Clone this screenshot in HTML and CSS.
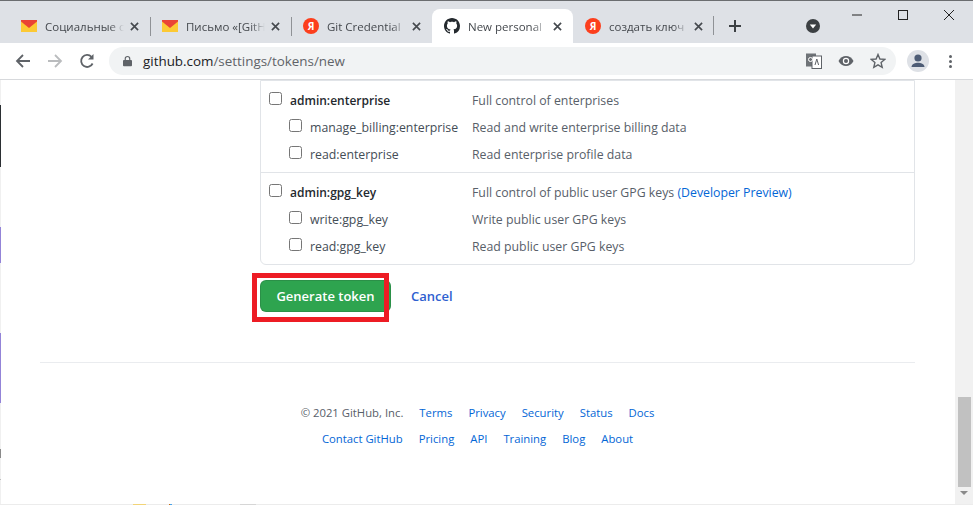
FILE: index.html
```html
<!DOCTYPE html>
<html lang="ru">
<head>
<meta charset="utf-8">
<title>New personal access token</title>
<link rel="stylesheet" href="styles.css">
</head>
<body>
<div class="browser">
  <div class="tabstrip">
    <div class="tab">
      <svg class="fav" viewBox="0 0 16 16"><rect y="2" width="16" height="12" fill="#fcc934"/><path d="M0 2h16v1.5L8 10 0 3.500z" fill="#ea4335"/></svg>
      <span class="tab-title">Социальные с</span>
      <svg class="tab-x" viewBox="0 0 10 10"><path d="M1 1l8 8M9 1l-8 8"/></svg>
    </div>
    <div class="tab sep">
      <svg class="fav" viewBox="0 0 16 16"><rect y="2" width="16" height="12" fill="#fcc934"/><path d="M0 2h16v1.5L8 10 0 3.500z" fill="#ea4335"/></svg>
      <span class="tab-title">Письмо «[GitH</span>
      <svg class="tab-x" viewBox="0 0 10 10"><path d="M1 1l8 8M9 1l-8 8"/></svg>
    </div>
    <div class="tab sep">
      <span class="ya">Я</span>
      <span class="tab-title">Git Credential</span>
      <svg class="tab-x" viewBox="0 0 10 10"><path d="M1 1l8 8M9 1l-8 8"/></svg>
    </div>
    <div class="tab active">
      <svg class="fav" viewBox="0 0 16 16"><path fill="#24292e" fill-rule="evenodd" d="M8 0C3.580 0 0 3.580 0 8c0 3.540 2.290 6.530 5.470 7.590.4.070.55-.17.55-.38 0-.19-.01-.82-.01-1.490-2.010.37-2.530-.49-2.690-.94-.09-.23-.48-.94-.82-1.130-.28-.15-.68-.52-.01-.53.63-.01 1.080.58 1.230.82.720 1.210 1.870.87 2.330.66.070-.52.280-.87.510-1.070-1.780-.2-3.640-.89-3.640-3.950 0-.87.310-1.590.820-2.150-.08-.2-.36-1.020.08-2.120 0 0 .67-.21 2.200.82.640-.18 1.320-.27 2-.27s1.360.09 2 .27c1.530-1.040 2.200-.82 2.200-.82.440 1.100.160 1.920.080 2.120.510.560.820 1.270.820 2.150 0 3.070-1.870 3.750-3.650 3.950.290.250.540.730.540 1.480 0 1.070-.010 1.930-.010 2.200 0 .210.150.460.550.380A8.010 8.010 0 0 0 16 8c0-4.420-3.580-8-8-8z"/></svg>
      <span class="tab-title">New personal</span>
      <svg class="tab-x" viewBox="0 0 10 10"><path d="M1 1l8 8M9 1l-8 8"/></svg>
    </div>
    <div class="tab">
      <span class="ya">Я</span>
      <span class="tab-title">создать ключ</span>
      <svg class="tab-x" viewBox="0 0 10 10"><path d="M1 1l8 8M9 1l-8 8"/></svg>
    </div>
    <div class="newtab">
      <svg class="plus" viewBox="0 0 12 12"><path d="M6 0v12M0 6h12"/></svg>
    </div>
    <svg class="tabsearch" viewBox="0 0 14 14"><circle cx="7" cy="7" r="7" fill="#3c4043"/><path d="M3.800 5.400h6.400L7 9.400z" fill="#fff"/></svg>
    <div class="winctl">
      <svg class="win" viewBox="0 0 12 12"><path d="M1 6h10"/></svg>
      <svg class="win" viewBox="0 0 12 12"><rect x="1.500" y="1.500" width="9" height="9"/></svg>
      <svg class="win" viewBox="0 0 12 12"><path d="M1 1l10 10M11 1L1 11"/></svg>
    </div>
  </div>

  <div class="toolbar">
    <svg class="nav" viewBox="0 0 16 16"><path d="M15 8H2M8 2L2 8l6 6"/></svg>
    <svg class="nav nav-off" viewBox="0 0 16 16"><path d="M1 8h13M8 2l6 6-6 6"/></svg>
    <svg class="nav" viewBox="0 0 16 16"><path d="M13.600 10.500A6 6 0 1 1 12.500 3.800"/><path class="solid" d="M14.500 1v5.500H9z"/></svg>
    <div class="omnibox">
      <svg class="lock" viewBox="0 0 10 12"><path d="M2.500 5V3.500a2.500 2.500 0 0 1 5 0V5" fill="none" stroke="#5f6368" stroke-width="1.300"/><rect y="4.800" width="10" height="7" rx="1" fill="#5f6368"/></svg>
      <span class="url"><span class="host">github.com</span>/settings/tokens/new</span>
      <div class="omni-actions">
        <svg class="omni-ic" viewBox="0 0 16 16"><rect x="0" y="0.500" width="10" height="13" fill="#6f7377"/><rect x="6" y="3" width="9.500" height="12.500" fill="#fff" stroke="#5f6368"/><path d="M9 12l1.800-6 1.800 6" fill="none" stroke="#5f6368"/><circle cx="4.500" cy="6.500" r="2" fill="none" stroke="#fff"/></svg>
        <svg class="omni-ic" viewBox="0 0 16 16"><path d="M0.500 8C2.200 4.800 5 3 8 3s5.800 1.800 7.500 5c-1.700 3.200-4.500 5-7.500 5S2.200 11.200.5 8z" fill="#5f6368"/><circle cx="8" cy="8" r="3.200" fill="#fff"/><circle cx="8" cy="8" r="2" fill="#5f6368"/></svg>
        <svg class="omni-ic" viewBox="0 0 16 16"><path d="M8 1.500l1.900 4.500 4.800.4-3.600 3.200 1.100 4.700L8 11.800l-4.200 2.500 1.100-4.700-3.600-3.200 4.800-.4z" fill="none" stroke="#5f6368" stroke-width="1.400"/></svg>
      </div>
    </div>
    <div class="avatar">
      <svg viewBox="0 0 22 22"><circle cx="11" cy="8" r="3.600" fill="#4d5c75"/><path d="M4.500 17c0-3.200 4-4.300 6.500-4.300s6.500 1.100 6.500 4.300z" fill="#4d5c75"/></svg>
    </div>
    <div class="kebab"><i></i><i></i><i></i></div>
  </div>

  <div class="viewport">
    <div class="edge">
      <i class="mark dark"></i>
      <i class="mark violet-a"></i>
      <i class="mark violet-b"></i>
      <i class="mark grey-a"></i>
      <i class="mark grey-b"></i>
    </div>
    <main class="page">
      <div class="scopes">
        <div class="group">
          <div class="row">
            <input class="check" type="checkbox">
            <span class="name strong">admin:enterprise</span>
            <span class="desc">Full control of enterprises</span>
          </div>
          <div class="row sub">
            <input class="check" type="checkbox">
            <span class="name">manage_billing:enterprise</span>
            <span class="desc">Read and write enterprise billing data</span>
          </div>
          <div class="row sub">
            <input class="check" type="checkbox">
            <span class="name">read:enterprise</span>
            <span class="desc">Read enterprise profile data</span>
          </div>
        </div>
        <div class="group">
          <div class="row">
            <input class="check" type="checkbox">
            <span class="name strong">admin:gpg_key</span>
            <span class="desc">Full control of public user GPG keys <a class="link" href="#">(Developer Preview)</a></span>
          </div>
          <div class="row sub">
            <input class="check" type="checkbox">
            <span class="name">write:gpg_key</span>
            <span class="desc">Write public user GPG keys</span>
          </div>
          <div class="row sub">
            <input class="check" type="checkbox">
            <span class="name">read:gpg_key</span>
            <span class="desc">Read public user GPG keys</span>
          </div>
        </div>
      </div>
      <div class="actions">
        <button class="btn" type="button">Generate token</button>
        <a class="cancel" href="#">Cancel</a>
        <span class="highlight"></span>
      </div>
      <footer class="footer">
        <div class="foot-row">
          <span class="copy">© 2021 GitHub, Inc.</span>
          <a class="link" href="#">Terms</a>
          <a class="link" href="#">Privacy</a>
          <a class="link" href="#">Security</a>
          <a class="link" href="#">Status</a>
          <a class="link" href="#">Docs</a>
        </div>
        <div class="foot-row">
          <a class="link" href="#">Contact GitHub</a>
          <a class="link" href="#">Pricing</a>
          <a class="link" href="#">API</a>
          <a class="link" href="#">Training</a>
          <a class="link" href="#">Blog</a>
          <a class="link" href="#">About</a>
        </div>
      </footer>
    </main>
    <div class="scrollbar">
      <div class="thumb"></div>
      <i class="arrow"></i>
    </div>
  </div>
  <div class="bottom-edge">
    <i class="peek gold"></i>
    <i class="peek orange"></i>
    <i class="peek blue"></i>
    <i class="peek grey"></i>
  </div>
</div>
</body>
</html>
```

FILE: styles.css
```css
* { box-sizing: border-box; }
html, body { margin: 0; padding: 0; height: 100%; overflow: hidden; background: #fff; }
body { font-family: "Open Sans", "Noto Sans", "Noto Sans CJK SC", sans-serif; color: #24292e; }
.browser { display: flex; flex-direction: column; width: 973px; height: 505px; }

/* Tab strip */
.tabstrip { display: flex; align-items: flex-end; height: 43px; padding-left: 9px; background: #dee1e6; border-top: 1px solid #6b6d70; position: relative; }
.tab { display: flex; align-items: center; width: 141px; height: 34px; padding: 0 10px 0 12px; position: relative; font-size: 11.500px; color: #45494e; }
.tab.sep::before { content: ""; position: absolute; left: 0; top: 8px; width: 1px; height: 19px; background: #8f9296; }
.tab.active { background: #fff; border-radius: 8px 8px 0 0; }
.fav { width: 16px; height: 16px; flex: none; }
.ya { width: 16px; height: 16px; flex: none; border-radius: 50%; background: #fc3f1d; color: #fff; font-size: 10px; font-weight: 700; line-height: 16px; text-align: center; }
.tab-title { flex: 1; margin-left: 8px; white-space: nowrap; overflow: hidden; -webkit-mask-image: linear-gradient(90deg, #000 82%, transparent); mask-image: linear-gradient(90deg, #000 82%, transparent); }
.tab-x { width: 9px; height: 9px; flex: none; margin-left: 6px; margin-right: 1px; fill: none; stroke: #45494e; stroke-width: 1.800; }
.newtab { display: flex; align-items: center; height: 19px; margin-bottom: 8px; padding-left: 15px; border-left: 1px solid #8f9296; margin-left: -1px; }
.plus { width: 12px; height: 12px; fill: none; stroke: #3c4043; stroke-width: 2; }
.tabsearch { width: 14px; height: 14px; margin-left: 65px; margin-bottom: 10px; }
.winctl { display: flex; gap: 34px; position: absolute; top: 8px; right: 18px; }
.win { width: 12px; height: 12px; fill: none; stroke: #222; stroke-width: 1; }

/* Toolbar */
.toolbar { display: flex; align-items: center; height: 37px; padding-left: 15px; background: #fff; border-bottom: 1px solid #d7d9dc; }
.nav { width: 16px; height: 16px; margin-right: 16px; fill: none; stroke: #5f6368; stroke-width: 1.800; }
.nav-off { stroke: #babcbe; }
.solid { fill: #5f6368; stroke: none; }
.omnibox { display: flex; align-items: center; width: 787px; height: 28px; margin-left: -2px; padding-left: 14px; border-radius: 14px; background: #f1f3f4; font-size: 13.400px; color: #5f6368; }
.lock { width: 9px; height: 12px; flex: none; }
.url { margin-left: 11px; white-space: nowrap; }
.host { color: #202124; }
.omni-actions { display: flex; align-items: center; gap: 16px; margin-left: auto; padding-right: 10px; }
.omni-ic { width: 16px; height: 16px; }
.avatar { width: 22px; height: 22px; margin-left: 11px; border-radius: 50%; background: #dee1e6; flex: none; }
.avatar svg { display: block; width: 22px; height: 22px; }
.kebab { display: flex; flex-direction: column; gap: 2px; margin-left: 20px; }
.kebab i { display: block; width: 3px; height: 3px; border-radius: 50%; background: #5f6368; }

/* Viewport */
.viewport { display: flex; flex: 1; min-height: 0; }
.edge { width: 1px; flex: none; background: #f0f0f0; display: flex; flex-direction: column; }
.mark { display: block; width: 1px; flex: none; }
.dark { height: 62px; margin-top: 25px; background: #2b2f33; }
.violet-a { height: 36px; margin-top: 60px; background: #9384d8; }
.violet-b { height: 70px; margin-top: 70px; background: #9384d8; }
.grey-a { height: 9px; margin-top: 46px; background: #8a8a8a; }
.grey-b { height: 1px; margin-top: 21px; background: #bdbdbd; }
.page { flex: 1; min-width: 0; padding: 0 40px 0 39px; }
.scrollbar { width: 18px; flex: none; background: #f1f1f1; display: flex; flex-direction: column; align-items: center; padding-top: 317px; }
.thumb { width: 13px; height: 90px; background: #c1c1c1; }
.arrow { margin-top: 4px; width: 0; height: 0; border-left: 4px solid transparent; border-right: 4px solid transparent; border-top: 4px solid #8a8a8a; }
.bottom-edge { display: flex; flex: none; height: 1px; background: #ececec; }
.peek { display: block; flex: none; height: 1px; }
.gold { width: 13px; margin-left: 133px; background: #f2d477; }
.orange { width: 1px; margin-left: 23px; background: #c46a12; }
.blue { width: 2px; background: #4aa3e8; }
.grey { width: 16px; margin-left: 68px; background: #d6d6d6; }

/* Scopes */
.scopes { margin-left: 220px; border: 1px solid #e1e4e8; border-radius: 0 0 6px 6px; }
.group { padding: 6px 8px 4px; }
.group + .group { border-top: 1px solid #e1e4e8; }
.row { display: flex; align-items: center; height: 27px; font-size: 12.300px; }
.check { width: 13px; height: 13px; margin: 0 8px 4px 0; flex: none; }
.name { width: 182px; flex: none; white-space: nowrap; color: #444d56; }
.row.sub .check { margin-left: 20px; }
.row.sub .name { width: 162px; }
.strong { font-weight: 600; font-size: 12px; color: #24292e; }
.desc { color: #586069; white-space: nowrap; }
.link { color: #0366d6; text-decoration: none; }

/* Actions */
.actions { position: relative; display: flex; align-items: center; margin: 15px 0 50px 220px; }
.btn { width: 131px; height: 32px; padding: 0; border: 1px solid rgba(27, 31, 35, .15); border-radius: 6px; background: #2ea44f; color: #fff; font: 600 13px "Open Sans", sans-serif; }
.cancel { margin-left: 20px; font-size: 13px; font-weight: 600; color: #2f5fd0; text-decoration: none; }
.highlight { position: absolute; left: -8px; top: -7px; width: 137px; height: 49px; border: 5px solid #ed1c24; }

/* Footer */
.footer { border-top: 1px solid #eaecef; padding-top: 36px; }
.foot-row { display: flex; justify-content: center; align-items: center; gap: 16px; height: 26px; font-size: 11.300px; color: #586069; }
```
